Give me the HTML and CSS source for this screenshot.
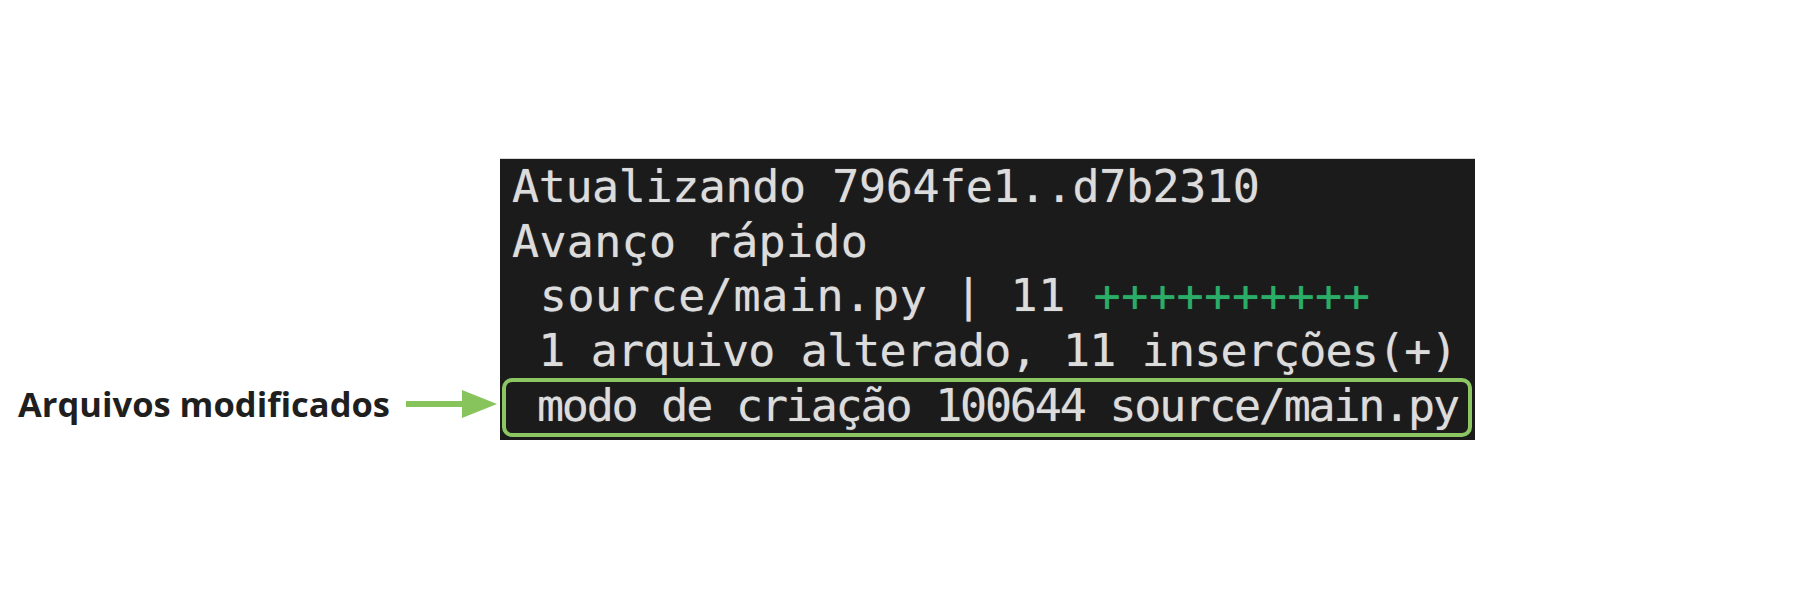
FILE: index.html
```html
<!DOCTYPE html>
<html lang="pt">
<head>
<meta charset="utf-8">
<title>Arquivos modificados</title>
<link rel="stylesheet" href="styles.css">
</head>
<body>
<main class="stage">
  <div class="callout">
    <span class="callout-label">Arquivos modificados</span>
    <svg class="callout-arrow" width="92" height="30" viewBox="0 0 92 30" aria-hidden="true">
      <rect x="0" y="12" width="60" height="6" fill="#88c45c"/>
      <polygon points="56,1 91,15 56,29" fill="#88c45c"/>
    </svg>
  </div>
  <div class="terminal">
    <div class="line line-1">Atualizando 7964fe1..d7b2310</div>
    <div class="line line-2">Avanço rápido</div>
    <div class="line line-3"> source/main.py | 11 <span class="plus">++++++++++</span></div>
    <div class="line line-4"> 1 arquivo alterado, 11 inserções(+)</div>
    <div class="line line-5 highlight"> modo de criação 100644 source/main.py</div>
  </div>
</main>
</body>
</html>
```

FILE: styles.css
```css
html, body {
  margin: 0;
  padding: 0;
  background: #ffffff;
}

.stage {
  display: flex;
  align-items: flex-end;
  padding: 159px 0 0 18px;
}

.callout {
  width: 482px;
  display: flex;
  align-items: center;
  justify-content: space-between;
  margin-bottom: 16px;
  height: 40px;
}

.callout-label {
  font-family: "Open Sans", "Noto Sans", sans-serif;
  font-weight: 700;
  font-size: 34.5px;
  line-height: 40px;
  color: #1f1f1f;
}

.callout-arrow {
  display: block;
  margin-right: 2px;
}

.terminal {
  width: 960px;
  padding: 1px 3px 3px 12px;
  background: #1b1b1b;
  border-top: 1px solid #d6d6d6;
  margin-top: -1px;
  font-family: "DejaVu Sans Mono", "Liberation Mono", monospace;
  font-size: 45px;
  color: #dcdcdc;
  text-shadow: 0 0 1px rgba(220, 220, 220, 0.6);
}

.line {
  white-space: pre;
  line-height: 54.5px;
  height: 54.5px;
}

.line-1 { letter-spacing: -0.4px; }
.line-2 { letter-spacing: 0.3px; }
.line-3 { letter-spacing: 0.6px; }
.line-4 { letter-spacing: -0.85px; }
.line-5 { letter-spacing: -2.2px; }

.plus {
  color: #2bad68;
  text-shadow: 0 0 1px rgba(43, 173, 104, 0.6);
}

.highlight {
  height: auto;
  line-height: 47px;
  margin-left: -10px;
  padding: 0 0 4px 6px;
  border: 4px solid #8bc663;
  border-radius: 10px;
}
```
